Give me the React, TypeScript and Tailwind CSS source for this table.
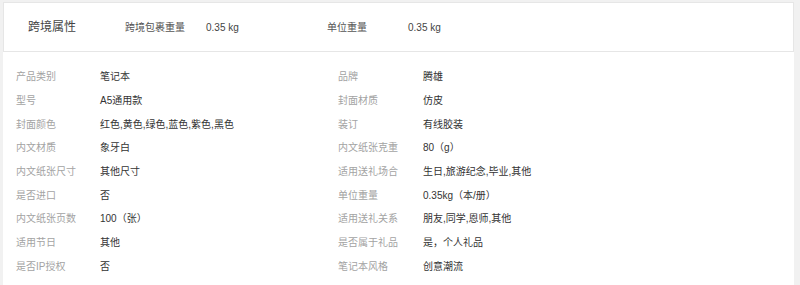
const crossBorder = [
  { label: '跨境包裹重量', value: '0.35 kg' },
  { label: '单位重量', value: '0.35 kg' },
];

const attributes: [string, string][] = [
  ['产品类别', '笔记本'],
  ['品牌', '腾雄'],
  ['型号', 'A5通用款'],
  ['封面材质', '仿皮'],
  ['封面颜色', '红色,黄色,绿色,蓝色,紫色,黑色'],
  ['装订', '有线胶装'],
  ['内文材质', '象牙白'],
  ['内文纸张克重', '80（g）'],
  ['内文纸张尺寸', '其他尺寸'],
  ['适用送礼场合', '生日,旅游纪念,毕业,其他'],
  ['是否进口', '否'],
  ['单位重量', '0.35kg（本/册）'],
  ['内文纸张页数', '100（张）'],
  ['适用送礼关系', '朋友,同学,恩师,其他'],
  ['适用节日', '其他'],
  ['是否属于礼品', '是，个人礼品'],
  ['是否IP授权', '否'],
  ['笔记本风格', '创意潮流'],
];

export default function App() {
  return (
    <div
      className="w-[800px] h-[285px] bg-[#f1f1f1] pl-[3px] pr-[6px] pt-[2px] overflow-hidden"
      style={{ fontFamily: '"Liberation Sans", "Noto Sans CJK SC", sans-serif' }}
    >
      <div className="bg-white h-full">
        <div className="h-[50px] border border-[#e6e6e6] flex items-center pl-[24px]">
          <span className="w-[97px] text-[12px] text-[#444]">跨境属性</span>
          {crossBorder.map((item) => (
            <div key={item.label} className="flex items-center">
              <span className="w-[81px] text-[10px] text-[#555]">{item.label}</span>
              <span className="w-[121px] text-[10px] text-[#444]">{item.value}</span>
            </div>
          ))}
        </div>

        <div className="grid grid-cols-[322px_1fr] pl-[13px] pt-[13px]">
          {attributes.map(([label, value], idx) => (
            <div key={`${label}-${idx}`} className="h-[23.7px] flex items-center text-[10px]">
              <span className={`${idx % 2 === 0 ? 'w-[84px]' : 'w-[85px]'} text-[#a3a3a3]`}>{label}</span>
              <span className="text-[#333]">{value}</span>
            </div>
          ))}
        </div>
      </div>
    </div>
  );
}
